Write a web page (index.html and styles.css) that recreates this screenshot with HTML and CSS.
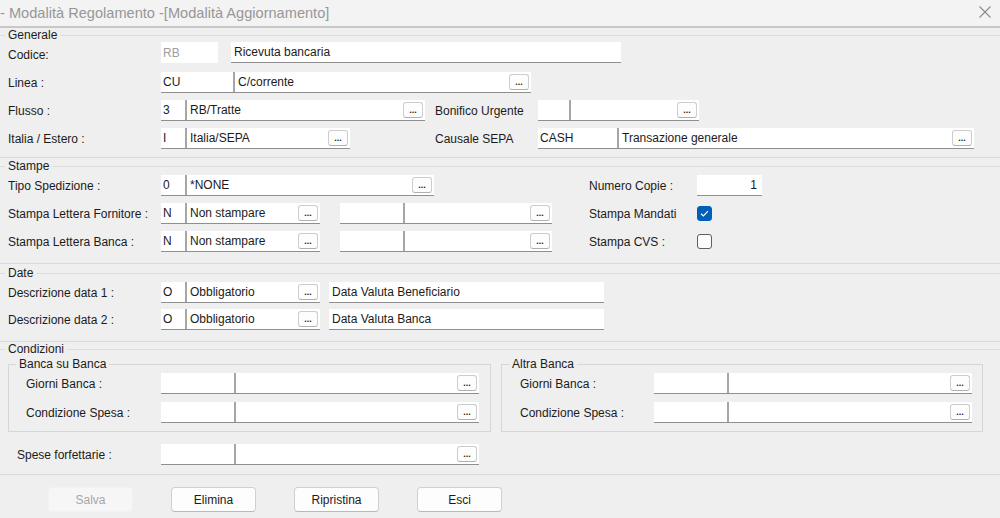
FILE: index.html
```html
<!DOCTYPE html>
<html lang="it">
<head>
    <meta charset="UTF-8">
    <meta name="viewport" content="width=device-width, initial-scale=1.0">
    <title>Modalità Regolamento</title>
    <link rel="stylesheet" href="styles.css">
</head>
<body>
    <div class="titlebar">
        <span class="title">- Modalità Regolamento -[Modalità Aggiornamento]</span>
        <svg class="close" width="12" height="12" viewBox="0 0 12 12">
            <path d="M0.5 0.5 L11.5 11.5 M11.5 0.5 L0.5 11.5" stroke="#8a8a8a" stroke-width="1.1" fill="none"/>
        </svg>
    </div>

    <!-- Generale -->
    <fieldset class="outer gen">
        <legend>Generale</legend>
        <div class="row first">
            <label class="lbl low">Codice:</label>
            <div class="field ro w-ro">RB</div>
            <div class="field w-codice">Ricevuta bancaria</div>
        </div>
        <div class="row second">
            <label class="lbl">Linea :</label>
            <div class="combo w370"><span class="code c73">CU</span><span class="desc">C/corrente</span><span class="dots">...</span></div>
        </div>
        <div class="row">
            <div class="left-gen">
                <label class="lbl">Flusso :</label>
                <div class="combo w264"><span class="code c26">3</span><span class="desc">RB/Tratte</span><span class="dots">...</span></div>
            </div>
            <label class="lbl-r">Bonifico Urgente</label>
            <div class="combo w161"><span class="code c33"></span><span class="desc"></span><span class="dots">...</span></div>
        </div>
        <div class="row">
            <div class="left-gen">
                <label class="lbl">Italia / Estero :</label>
                <div class="combo w189"><span class="code c26">I</span><span class="desc">Italia/SEPA</span><span class="dots">...</span></div>
            </div>
            <label class="lbl-r">Causale SEPA</label>
            <div class="combo w436"><span class="code c81">CASH</span><span class="desc">Transazione generale</span><span class="dots">...</span></div>
        </div>
    </fieldset>

    <!-- Stampe -->
    <fieldset class="outer stampe">
        <legend>Stampe</legend>
        <div class="row">
            <div class="left-st">
                <label class="lbl">Tipo Spedizione :</label>
                <div class="combo w273"><span class="code c26">0</span><span class="desc">*NONE</span><span class="dots">...</span></div>
            </div>
            <label class="lbl-st">Numero Copie :</label>
            <div class="field num">1</div>
        </div>
        <div class="row">
            <div class="left-st">
                <label class="lbl">Stampa Lettera Fornitore :</label>
                <div class="combo w159"><span class="code c26">N</span><span class="desc">Non stampare</span><span class="dots">...</span></div>
                <div class="combo w212 gap20"><span class="code c65"></span><span class="desc"></span><span class="dots">...</span></div>
            </div>
            <label class="lbl-st">Stampa Mandati</label>
            <span class="check on">
                <svg width="13" height="13" viewBox="0 0 13 13"><path d="M3 6.8 L5.4 9 L10 4.2" stroke="#fff" stroke-width="1.2" fill="none"/></svg>
            </span>
        </div>
        <div class="row">
            <div class="left-st">
                <label class="lbl">Stampa Lettera Banca :</label>
                <div class="combo w159"><span class="code c26">N</span><span class="desc">Non stampare</span><span class="dots">...</span></div>
                <div class="combo w212 gap20"><span class="code c65"></span><span class="desc"></span><span class="dots">...</span></div>
            </div>
            <label class="lbl-st">Stampa CVS :</label>
            <span class="check"></span>
        </div>
    </fieldset>

    <!-- Date -->
    <fieldset class="outer date">
        <legend>Date</legend>
        <div class="row">
            <label class="lbl">Descrizione data 1 :</label>
            <div class="combo w159"><span class="code c26">O</span><span class="desc">Obbligatorio</span><span class="dots">...</span></div>
            <div class="field w-data">Data Valuta Beneficiario</div>
        </div>
        <div class="row">
            <label class="lbl">Descrizione data 2 :</label>
            <div class="combo w159"><span class="code c26">O</span><span class="desc">Obbligatorio</span><span class="dots">...</span></div>
            <div class="field w-data">Data Valuta Banca</div>
        </div>
    </fieldset>

    <!-- Condizioni -->
    <fieldset class="outer cond">
        <legend>Condizioni</legend>
        <div class="banche">
            <fieldset class="inner">
                <legend>Banca su Banca</legend>
                <div class="row">
                    <label class="lbl-in">Giorni Banca :</label>
                    <div class="combo w318"><span class="code c75"></span><span class="desc"></span><span class="dots">...</span></div>
                </div>
                <div class="row">
                    <label class="lbl-in">Condizione Spesa :</label>
                    <div class="combo w318"><span class="code c75"></span><span class="desc"></span><span class="dots">...</span></div>
                </div>
            </fieldset>
            <fieldset class="inner right">
                <legend>Altra Banca</legend>
                <div class="row">
                    <label class="lbl-in">Giorni Banca :</label>
                    <div class="combo w318"><span class="code c75"></span><span class="desc"></span><span class="dots">...</span></div>
                </div>
                <div class="row">
                    <label class="lbl-in">Condizione Spesa :</label>
                    <div class="combo w318"><span class="code c75"></span><span class="desc"></span><span class="dots">...</span></div>
                </div>
            </fieldset>
        </div>
        <div class="row spese">
            <label class="lbl-sp">Spese forfettarie :</label>
            <div class="combo w318"><span class="code c75"></span><span class="desc"></span><span class="dots">...</span></div>
        </div>
    </fieldset>

    <div class="actions">
        <button class="btn" disabled>Salva</button>
        <button class="btn">Elimina</button>
        <button class="btn">Ripristina</button>
        <button class="btn">Esci</button>
    </div>
</body>
</html>
```

FILE: styles.css
```css
body {
    margin: 0;
    width: 1000px;
    height: 518px;
    overflow: hidden;
    background-color: #efefef;
    font-family: "Liberation Sans", Arial, sans-serif;
    font-size: 12px;
    color: #1b1b1b;
}

.titlebar {
    height: 26px;
    display: flex;
    align-items: center;
    justify-content: space-between;
    background-color: #f3f3f3;
    border-bottom: 2px solid #c8c8c8;
}
.title {
    font-size: 14.6px;
    color: #979797;
}
.close {
    margin-right: 9px;
    margin-top: -2px;
}

/* group boxes */
fieldset {
    margin: 0;
    padding: 0;
    min-width: 0;
    border: 1px solid #d9d9d9;
}
legend {
    padding: 0 3px;
    line-height: 14px;
}
.outer {
    border-left: none;
    border-right: none;
    border-top-color: #dcdcdc;
}
.outer > legend {
    margin-left: 5px;
}
.gen {
    padding-bottom: 8px;
}
.stampe {
    margin-top: 1px;
    padding-top: 2px;
    padding-bottom: 11px;
}
.date {
    margin-top: 2px;
    padding-top: 2px;
    padding-bottom: 11px;
}
.cond {
    padding-bottom: 9px;
}

.row {
    display: flex;
    align-items: center;
    height: 21px;
    padding-left: 8px;
    margin-top: 7px;
}
.gen .row.first,
.stampe .row:first-of-type,
.date .row:first-of-type {
    margin-top: 0;
}
.gen .row.second {
    margin-top: 9px;
}
.date .row + .row {
    margin-top: 6px;
}

.lbl {
    width: 153px;
    flex-shrink: 0;
    white-space: nowrap;
}
.lbl.low {
    padding-top: 4px;
}
.left-gen {
    width: 427px;
    display: flex;
    align-items: center;
}
.lbl-r {
    width: 103px;
    flex-shrink: 0;
}
.left-st {
    width: 581px;
    display: flex;
    align-items: center;
}
.lbl-st {
    width: 108px;
    flex-shrink: 0;
}

/* input fields */
.field {
    height: 21px;
    box-sizing: border-box;
    display: flex;
    align-items: center;
    padding: 0 3px;
    background-color: #ffffff;
    border-bottom: 1px solid #8f8f8f;
    white-space: nowrap;
}
.field.ro {
    color: #9d9d9d;
    border-bottom: none;
    padding-left: 2px;
}
.w-ro { width: 57px; }
.w-codice { width: 390px; margin-left: 13px; }
.w-data { width: 275px; margin-left: 9px; }
.field.num {
    width: 65px;
    justify-content: flex-end;
    padding-right: 5px;
}

.combo {
    height: 21px;
    box-sizing: border-box;
    display: flex;
    align-items: center;
    background-color: #ffffff;
    border-bottom: 1px solid #8f8f8f;
    flex-shrink: 0;
}
.code {
    height: 20px;
    box-sizing: border-box;
    display: flex;
    align-items: center;
    padding-left: 2px;
    border-right: 2px solid #a6a6a6;
    flex-shrink: 0;
}
.desc {
    flex: 1;
    padding-left: 3px;
    white-space: nowrap;
    overflow: hidden;
}
.dots {
    width: 20px;
    height: 16px;
    box-sizing: border-box;
    margin-right: 2px;
    display: flex;
    align-items: flex-end;
    justify-content: center;
    padding-bottom: 2px;
    background-color: #fdfdfd;
    border: 1px solid #cdcdcd;
    border-bottom-color: #b0b0b0;
    border-radius: 3px;
    font-size: 9px;
    font-weight: bold;
    line-height: 9px;
    color: #222;
}
.w159 { width: 159px; }
.w161 { width: 161px; }
.w189 { width: 189px; }
.w212 { width: 212px; }
.w264 { width: 264px; }
.w273 { width: 273px; }
.w318 { width: 318px; }
.w370 { width: 370px; }
.w436 { width: 436px; }
.c26 { width: 26px; }
.c33 { width: 33px; }
.c65 { width: 65px; }
.c73 { width: 74px; }
.c75 { width: 75px; }
.c81 { width: 81px; }
.gap20 { margin-left: 20px; }

.check {
    width: 15px;
    height: 15px;
    box-sizing: border-box;
    display: flex;
    align-items: center;
    justify-content: center;
    border: 1px solid #5e5e5e;
    border-radius: 3px;
    background-color: #fbfbfb;
}
.check.on {
    background-color: #005fb8;
    border-color: #005fb8;
}

/* condizioni */
.banche {
    display: flex;
    gap: 10px;
    padding-left: 8px;
    margin-top: 1px;
}
.inner {
    width: 483px;
    box-sizing: border-box;
    border-color: #d6d6d6;
    padding-top: 2px;
    padding-bottom: 8px;
}
.inner.right {
    width: 482px;
}
.inner > legend {
    margin-left: 7px;
}
.inner .row {
    padding-left: 17px;
}
.inner .row:first-of-type {
    margin-top: 0;
}
.inner .row + .row {
    margin-top: 8px;
}
.inner.right .row {
    padding-left: 18px;
}
.lbl-in {
    width: 135px;
    flex-shrink: 0;
}
.inner.right .lbl-in {
    width: 134px;
}
.row.spese {
    margin-top: 12px;
    padding-left: 17px;
}
.lbl-sp {
    width: 144px;
    flex-shrink: 0;
}

/* bottom buttons */
.actions {
    display: flex;
    gap: 38px;
    padding-left: 48px;
    margin-top: 12px;
}
.btn {
    width: 85px;
    height: 25px;
    padding: 0;
    background-color: #fdfdfd;
    border: 1px solid #d0d0d0;
    border-bottom-color: #b9b9b9;
    border-radius: 4px;
    font-family: "Liberation Sans", Arial, sans-serif;
    font-size: 12px;
    color: #1b1b1b;
}
.btn:disabled {
    background-color: #f6f6f6;
    border-color: #f2f2f2;
    color: #a8a8a8;
}
```
